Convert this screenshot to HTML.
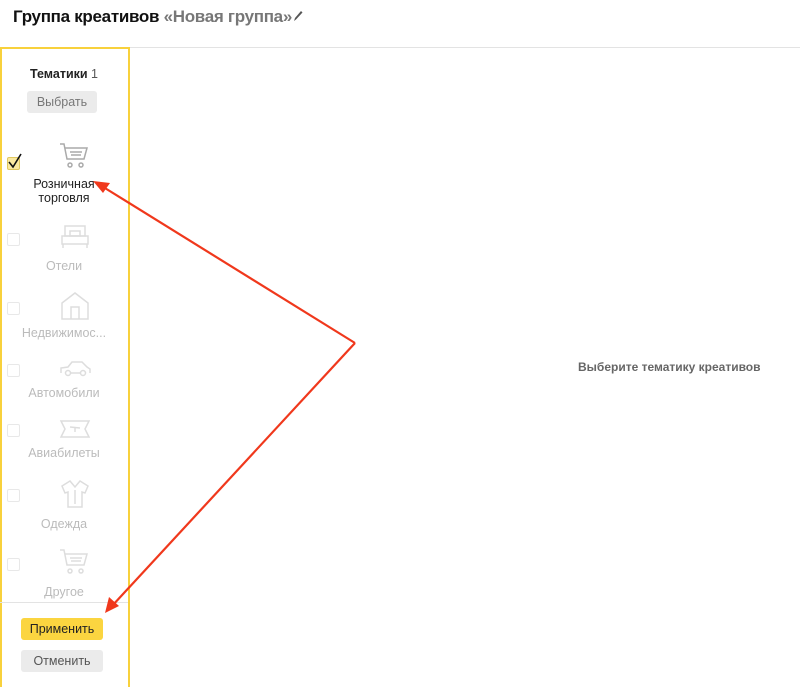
<!DOCTYPE html>
<html><head><meta charset="utf-8"><style>
*{margin:0;padding:0;box-sizing:border-box}
body{width:800px;height:685px;background:#fff;font-family:"Liberation Sans",sans-serif;position:relative;overflow:hidden}
.hdr{position:absolute;left:13px;top:7px;font-size:17px;font-weight:bold;color:#111;letter-spacing:-0.3px}
.hdr span{color:#777}
.line{position:absolute;left:0;top:47px;width:800px;height:1px;background:#e3e3e3}
.panel{position:absolute;left:0;top:47px;width:130px;height:640px;border:2px solid #f8d13c;border-bottom:none}
.t{position:absolute;width:128px;text-align:center;font-size:12.5px}
.btn{position:absolute;border-radius:3px;font-size:12.5px;text-align:center;line-height:22px}
.cb{position:absolute;left:7px;width:13px;height:13px;border:1px solid #e8e8e8;border-radius:2px}
.lbl{color:#bbb}
.msg{position:absolute;left:578px;top:360px;font-size:12px;font-weight:bold;color:#666}
</style></head><body>
<div class="hdr">Группа креативов <span>«Новая группа»</span><svg width="12" height="14" viewBox="0 0 12 14" style="vertical-align:-1px"><path d="M2 12 L3 9 L9 2 L10.5 3.5 L4 10.5 Z" fill="#555"/></svg></div>
<div class="line"></div>
<div class="panel"></div>
<div class="t" style="top:67px;font-weight:bold;color:#222">Тематики <span style="font-weight:normal;color:#555">1</span></div>
<div class="btn" style="left:27px;top:91px;width:70px;background:#ebebeb;color:#777">Выбрать</div>

<div class="cb" style="top:157px;background:#fbe9a0;border-color:#e0c860"></div>
<svg style="position:absolute;left:6px;top:152px" width="18" height="18"><path d="M3 10 L7 15 L15 2" stroke="#111" stroke-width="1.6" fill="none"/></svg>
<svg style="position:absolute;left:58px;top:142px" width="32" height="28" fill="none" stroke="#aaa" stroke-width="1.5"><path d="M2 2 L6 2 L9 17 L26 17 L29 6 L7 6"/><path d="M12 10 H24 M13 13 H23"/><circle cx="12" cy="23" r="2"/><circle cx="23" cy="23" r="2"/></svg>
<div class="t" style="top:177px;color:#222;line-height:14px">Розничная<br>торговля</div>

<div class="cb" style="top:233px"></div>
<svg style="position:absolute;left:60px;top:224px" width="30" height="26" fill="none" stroke="#ddd" stroke-width="1.5"><rect x="5" y="2" width="20" height="10"/><rect x="10" y="7" width="10" height="5"/><path d="M2 12 H28 V20 H2 Z M3 20 V24 M27 20 V24"/></svg>
<div class="t lbl" style="top:259px">Отели</div>

<div class="cb" style="top:302px"></div>
<svg style="position:absolute;left:59px;top:291px" width="32" height="30" fill="none" stroke="#ddd" stroke-width="1.5"><path d="M3 12 L16 2 L29 12 V28 H3 Z"/><path d="M12 28 V16 H20 V28"/></svg>
<div class="t lbl" style="top:326px">Недвижимос...</div>

<div class="cb" style="top:364px"></div>
<svg style="position:absolute;left:58px;top:360px" width="34" height="18" fill="none" stroke="#ddd" stroke-width="1.5"><path d="M3 13 V8 L10 7 L14 2 H24 L29 7 L32 9 V13"/><circle cx="10" cy="13" r="2.5"/><circle cx="25" cy="13" r="2.5"/><path d="M13 13 H22"/></svg>
<div class="t lbl" style="top:386px">Автомобили</div>

<div class="cb" style="top:424px"></div>
<svg style="position:absolute;left:58px;top:418px" width="34" height="22" fill="none" stroke="#ddd" stroke-width="1.5"><path d="M3 3 H31 L27 11 L31 19 H3 L7 11 Z"/><path d="M12 9 L22 10 M17 10 L17 14"/></svg>
<div class="t lbl" style="top:446px">Авиабилеты</div>

<div class="cb" style="top:489px"></div>
<svg style="position:absolute;left:59px;top:478px" width="32" height="32" fill="none" stroke="#ddd" stroke-width="1.5"><path d="M11 3 L3 8 L6 15 L9 14 V29 H23 V14 L26 15 L29 8 L21 3 L16 9 Z"/><path d="M16 12 V26"/></svg>
<div class="t lbl" style="top:517px">Одежда</div>

<div class="cb" style="top:558px"></div>
<svg style="position:absolute;left:58px;top:548px" width="32" height="28" fill="none" stroke="#ddd" stroke-width="1.5"><path d="M2 2 L6 2 L9 17 L26 17 L29 6 L7 6"/><path d="M12 10 H24 M13 13 H23"/><circle cx="12" cy="23" r="2"/><circle cx="23" cy="23" r="2"/></svg>
<div class="t lbl" style="top:585px">Другое</div>

<div style="position:absolute;left:0;top:602px;width:128px;height:1px;background:#e3e3e3"></div>
<div class="btn" style="left:21px;top:618px;width:82px;background:#fbd540;color:#222">Применить</div>
<div class="btn" style="left:21px;top:650px;width:82px;background:#ebebeb;color:#555">Отменить</div>

<div class="msg">Выберите тематику креативов</div>

<svg style="position:absolute;left:0;top:0" width="800" height="685">
<g stroke="#f0381c" stroke-width="2.2" fill="none"><path d="M355 343 L100 185"/><path d="M355 343 L112 606"/></g>
<path d="M93 181 L110 183 L103 193 Z" fill="#f0381c"/>
<path d="M105 613 L109 597 L119 606 Z" fill="#f0381c"/>
</svg>
</body></html>
